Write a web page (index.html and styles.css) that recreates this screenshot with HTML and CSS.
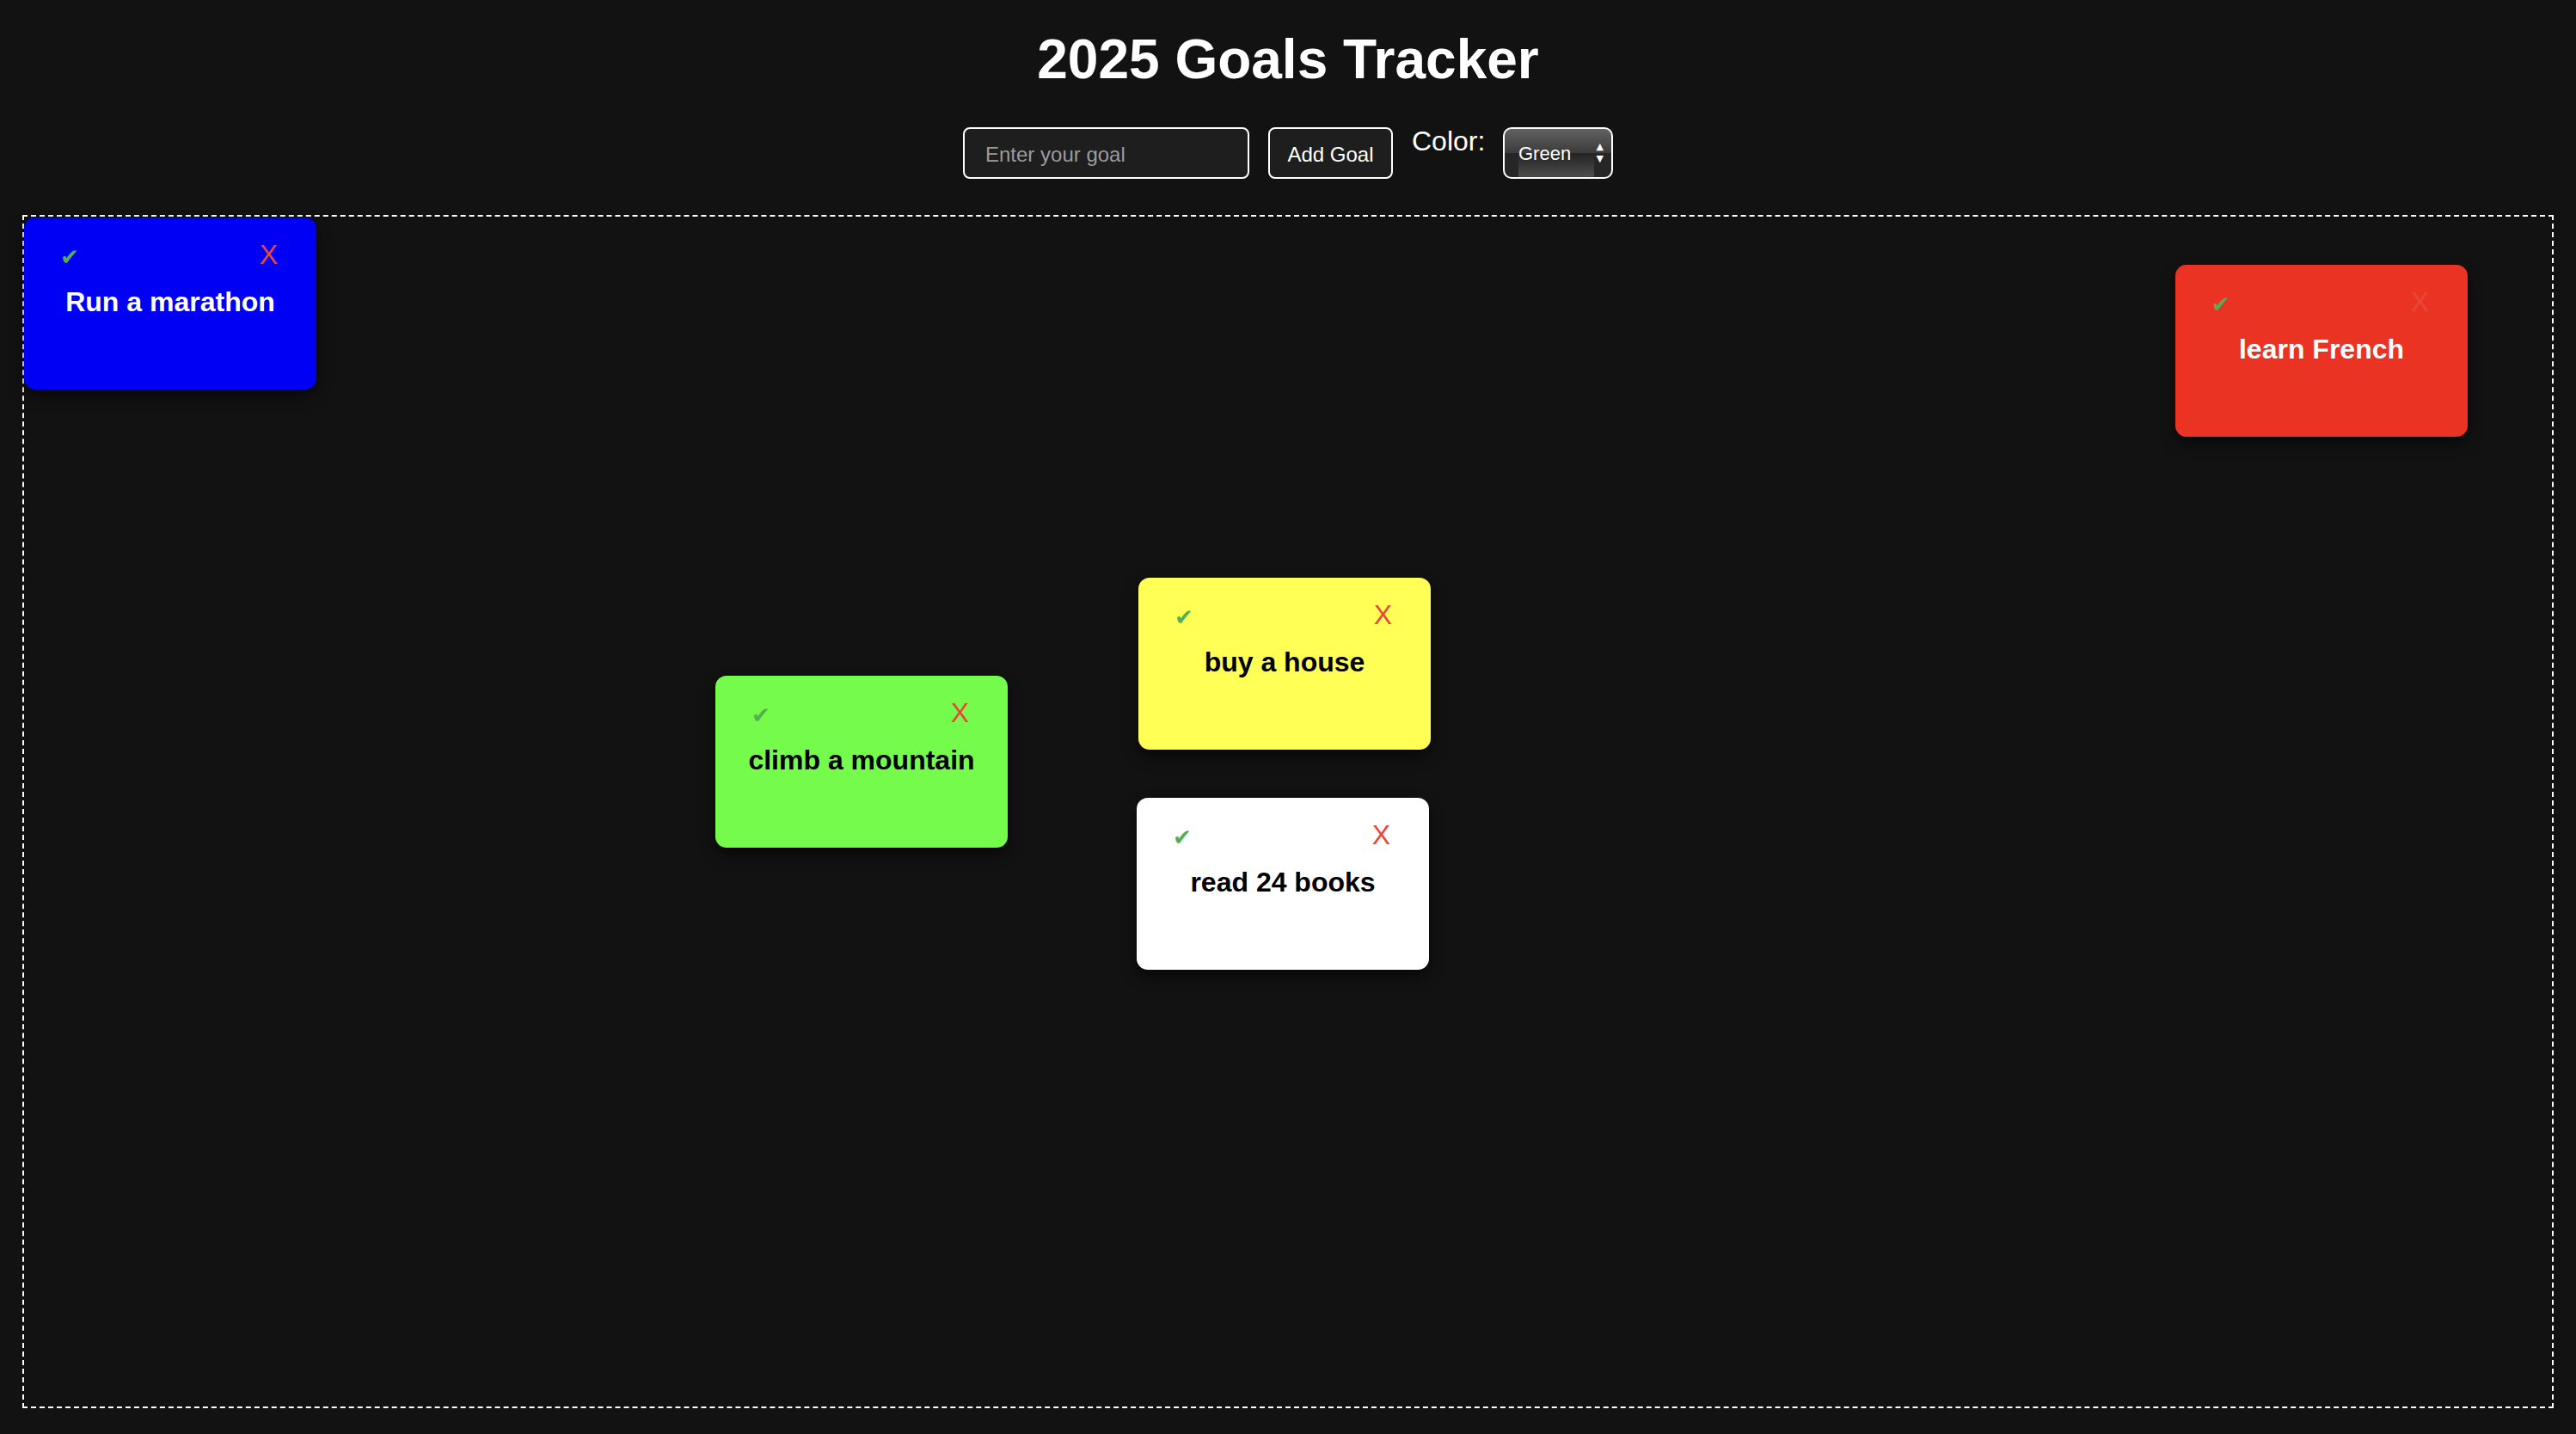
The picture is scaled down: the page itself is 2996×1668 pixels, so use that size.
FILE: index.html
```html
<!DOCTYPE html>
<html lang="en">
<head>
<meta charset="utf-8">
<title>2025 Goals Tracker</title>
<link rel="stylesheet" href="styles.css">
</head>
<body>
<h1 class="title">2025 Goals Tracker</h1>
<div class="controls">
  <input class="goal-input" type="text" placeholder="Enter your goal">
  <button class="add-btn">Add Goal</button>
  <label class="color-label">Color:</label>
  <div class="select-wrap">
    <select class="color-select">
      <option>Green</option>
    </select>
    <span class="select-arrows">&#9650;<br>&#9660;</span>
  </div>
</div>
<div class="board">
  <div class="card card-blue" style="left:0px;top:1px">
    <div class="card-head"><span class="check">&#10004;</span><span class="close">X</span></div>
    <div class="card-text">Run a marathon</div>
  </div>
  <div class="card card-red" style="left:2502px;top:56px">
    <div class="card-head"><span class="check">&#10004;</span><span class="close">X</span></div>
    <div class="card-text">learn French</div>
  </div>
  <div class="card card-green" style="left:804px;top:534px">
    <div class="card-head"><span class="check">&#10004;</span><span class="close">X</span></div>
    <div class="card-text">climb a mountain</div>
  </div>
  <div class="card card-yellow" style="left:1296px;top:420px">
    <div class="card-head"><span class="check">&#10004;</span><span class="close">X</span></div>
    <div class="card-text">buy a house</div>
  </div>
  <div class="card card-white" style="left:1294px;top:676px">
    <div class="card-head"><span class="check">&#10004;</span><span class="close">X</span></div>
    <div class="card-text">read 24 books</div>
  </div>
</div>
</body>
</html>
```

FILE: styles.css
```css
html, body {
  margin: 0;
  padding: 0;
}
body {
  background: #121212;
  color: #ffffff;
  font-family: "Liberation Sans", Arial, sans-serif;
  overflow: hidden;
}
.title {
  margin: 32px 0 0;
  font-size: 64px;
  line-height: 74px;
  font-weight: bold;
  text-align: center;
}
.controls {
  margin-top: 42px;
  display: flex;
  justify-content: center;
  align-items: flex-start;
  height: 60px;
}
.goal-input {
  box-sizing: border-box;
  width: 333px;
  height: 60px;
  margin: 0;
  padding: 3px 24px 0;
  background: #1e1e1e;
  border: 2px solid #ffffff;
  border-radius: 8px;
  color: #ffffff;
  font-family: "Liberation Sans", Arial, sans-serif;
  font-size: 24px;
  outline: none;
}
.goal-input::placeholder {
  color: #9b9b9b;
}
.add-btn {
  box-sizing: border-box;
  width: 145px;
  height: 60px;
  margin: 0 0 0 22px;
  padding: 3px 0 0;
  background: #1e1e1e;
  border: 2px solid #ffffff;
  border-radius: 8px;
  color: #ffffff;
  font-family: "Liberation Sans", Arial, sans-serif;
  font-size: 24px;
}
.color-label {
  margin: -2px 0 0 22px;
  font-size: 32px;
  line-height: 37px;
  width: 85px;
}
.select-wrap {
  position: relative;
  margin-left: 21px;
  width: 128px;
  height: 60px;
}
.color-select {
  appearance: none;
  -webkit-appearance: none;
  box-sizing: border-box;
  width: 128px;
  height: 60px;
  margin: 0;
  padding: 0 0 0 16px;
  border: 2px solid #ffffff;
  border-radius: 10px;
  color: #ffffff;
  font-family: "Liberation Sans", Arial, sans-serif;
  font-size: 22px;
  background-color: #262626;
  background-image:
    linear-gradient(#626262, #3b3b3b),
    linear-gradient(#262626, #4d4d4d);
  background-size: 100% 50%, calc(100% - 36px) 46%;
  background-position: 0 0, 16px 100%;
  background-repeat: no-repeat;
  outline: none;
}
.select-arrows {
  position: absolute;
  right: 11px;
  top: 16px;
  font-size: 11px;
  line-height: 14px;
  color: #ffffff;
  font-family: "DejaVu Sans", sans-serif;
  pointer-events: none;
}
.board {
  position: relative;
  box-sizing: border-box;
  margin: 42px 26px 0;
  height: 1388px;
  border: 2px dashed #ffffff;
}
.card {
  position: absolute;
  box-sizing: border-box;
  width: 340px;
  height: 200px;
  border-radius: 13px;
  padding-top: 23px;
  box-shadow: 0 8px 16px rgba(0, 0, 0, 0.55);
}
.card-head {
  display: flex;
  justify-content: space-between;
  align-items: center;
  height: 40px;
  padding: 0 45px 0 42px;
}
.check {
  color: #55ad55;
  font-family: "DejaVu Sans", sans-serif;
  font-size: 26px;
  line-height: 40px;
  margin-top: 6px;
}
.close {
  color: #e8483a;
  font-size: 32px;
  line-height: 40px;
}
.card-text {
  margin-top: 15px;
  font-size: 32px;
  line-height: 40px;
  font-weight: bold;
  text-align: center;
}
.card-blue { background: #0000f5; color: #ffffff; }
.card-red { background: #ea3323; color: #ffffff; }
.card-green { background: #75fb4c; color: #000000; }
.card-yellow { background: #ffff55; color: #000000; }
.card-white { background: #ffffff; color: #000000; }
```
